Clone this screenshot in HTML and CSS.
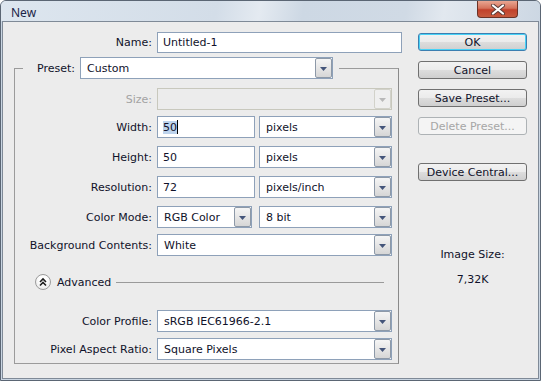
FILE: index.html
```html
<!DOCTYPE html>
<html>
<head>
    <title>New</title>
    <link rel="stylesheet" href="styles.css">
</head>
<body>
<div class="window">
    <div class="titlebar">
        <span class="title">New</span>
        <button class="close-btn">
            <svg width="16" height="11" viewBox="0 0 16 11">
                <path d="M3 1.5l10 8M13 1.5l-10 8" stroke="#5a3a36" stroke-width="4" stroke-linecap="round"/>
                <path d="M3 1.5l10 8M13 1.5l-10 8" stroke="#fff" stroke-width="2.2" stroke-linecap="round"/>
            </svg>
        </button>
    </div>
    <div class="client">
        <div class="main">
            <div class="row name-row">
                <span class="lbl name-lbl">Name:</span>
                <div class="field name-field">Untitled-1</div>
            </div>
            <fieldset class="group">
                <legend class="preset">
                    <span class="lbl preset-lbl">Preset:</span>
                    <div class="combo preset-combo"><span class="val">Custom</span><span class="drop"><svg width="7" height="4" viewBox="0 0 7 4"><path d="M0 0h7L3.5 4z"/></svg></span></div>
                </legend>

                <div class="row r-size">
                    <span class="lbl disabled">Size:</span>
                    <div class="combo wide disabled"><span class="val"></span><span class="drop"><svg width="7" height="4" viewBox="0 0 7 4"><path d="M0 0h7L3.5 4z"/></svg></span></div>
                </div>
                <div class="row r-width">
                    <span class="lbl">Width:</span>
                    <div class="field num"><span class="sel">50</span><span class="caret"></span></div>
                    <div class="combo unit"><span class="val">pixels</span><span class="drop"><svg width="7" height="4" viewBox="0 0 7 4"><path d="M0 0h7L3.5 4z"/></svg></span></div>
                </div>
                <div class="row r-height">
                    <span class="lbl">Height:</span>
                    <div class="field num">50</div>
                    <div class="combo unit"><span class="val">pixels</span><span class="drop"><svg width="7" height="4" viewBox="0 0 7 4"><path d="M0 0h7L3.5 4z"/></svg></span></div>
                </div>
                <div class="row r-res">
                    <span class="lbl">Resolution:</span>
                    <div class="field num">72</div>
                    <div class="combo unit"><span class="val">pixels/inch</span><span class="drop"><svg width="7" height="4" viewBox="0 0 7 4"><path d="M0 0h7L3.5 4z"/></svg></span></div>
                </div>
                <div class="row r-mode">
                    <span class="lbl">Color Mode:</span>
                    <div class="combo mode"><span class="val">RGB Color</span><span class="drop"><svg width="7" height="4" viewBox="0 0 7 4"><path d="M0 0h7L3.5 4z"/></svg></span></div>
                    <div class="combo unit"><span class="val">8 bit</span><span class="drop"><svg width="7" height="4" viewBox="0 0 7 4"><path d="M0 0h7L3.5 4z"/></svg></span></div>
                </div>
                <div class="row r-bg">
                    <span class="lbl">Background Contents:</span>
                    <div class="combo wide"><span class="val">White</span><span class="drop"><svg width="7" height="4" viewBox="0 0 7 4"><path d="M0 0h7L3.5 4z"/></svg></span></div>
                </div>

                <div class="advanced">
                    <span class="adv-btn">
                        <svg width="10" height="10" viewBox="0 0 10 10">
                            <path d="M2 5l3-3 3 3M2 8.5l3-3 3 3" fill="none" stroke="#1d1d1d" stroke-width="1.6"/>
                        </svg>
                    </span>
                    <span class="adv-text">Advanced</span>
                    <span class="adv-line"></span>
                </div>

                <div class="row r-profile">
                    <span class="lbl">Color Profile:</span>
                    <div class="combo wide"><span class="val">sRGB IEC61966-2.1</span><span class="drop"><svg width="7" height="4" viewBox="0 0 7 4"><path d="M0 0h7L3.5 4z"/></svg></span></div>
                </div>
                <div class="row r-aspect">
                    <span class="lbl">Pixel Aspect Ratio:</span>
                    <div class="combo wide"><span class="val">Square Pixels</span><span class="drop"><svg width="7" height="4" viewBox="0 0 7 4"><path d="M0 0h7L3.5 4z"/></svg></span></div>
                </div>
            </fieldset>
        </div>

        <div class="side">
            <button class="btn default">OK</button>
            <button class="btn">Cancel</button>
            <button class="btn">Save Preset...</button>
            <button class="btn" disabled>Delete Preset...</button>
            <button class="btn device">Device Central...</button>
            <div class="img-size">
                <p>Image Size:</p>
                <p>7,32K</p>
            </div>
        </div>
    </div>
</div>
</body>
</html>
```

FILE: styles.css
```css
* {
    box-sizing: border-box;
}

body {
    margin: 0;
    padding: 0;
    width: 541px;
    height: 381px;
    overflow: hidden;
    font-family: "DejaVu Sans", sans-serif;
    font-size: 11px;
    color: #10122a;
}

.window {
    width: 541px;
    height: 381px;
    border: 1px solid #5b6674;
    border-radius: 6px 6px 0 0;
    background: #c9d5e2;
    display: flex;
    flex-direction: column;
}

.titlebar {
    height: 20px;
    display: flex;
    align-items: flex-start;
    justify-content: space-between;
    background: linear-gradient(100deg, #dde6ef 0%, #d3dde8 40%, #e4eaf1 48%, #cdd8e4 56%, #d0dae5 75%, #e2e8ef 82%, #ccd7e3 100%);
    border-radius: 5px 5px 0 0;
}

.title {
    font-family: "Noto Sans", sans-serif;
    font-size: 12px;
    color: #1b2447;
    margin: 3px 0 0 10px;
}

.close-btn {
    width: 41px;
    height: 17px;
    margin: 0 22px 0 0;
    padding: 0;
    border: 1px solid #6b3226;
    border-top: none;
    border-radius: 0 0 4px 4px;
    background: linear-gradient(#e9a692 0%, #d5735c 45%, #c1412b 55%, #c65a3e 100%);
    display: flex;
    align-items: center;
    justify-content: center;
}

.client {
    flex: 1;
    margin: 0 1px 1px;
    border: 1px solid #7f8a97;
    background: #ececec;
    display: flex;
}

.main {
    width: 403px;
}

.row {
    display: flex;
    align-items: center;
}

.lbl {
    text-align: right;
    margin-right: 5px;
    white-space: nowrap;
}

.lbl.disabled {
    color: #a3a3a3;
}

.name-row {
    margin-top: 10px;
}

.name-lbl {
    width: 149px;
}

.field {
    height: 22px;
    border: 1px solid #8ea1b9;
    background: #fff;
    padding: 0 5px;
    display: flex;
    align-items: center;
    line-height: 13px;
}

.name-field {
    width: 245px;
    height: 21px;
}

.num {
    width: 98px;
    margin-right: 4px;
}

.sel {
    background: #bdd3ec;
}

.caret {
    width: 1px;
    height: 14px;
    background: #000;
}

.combo {
    height: 22px;
    border: 1px solid #8ea1b9;
    background: #fff;
    display: flex;
    align-items: stretch;
}

.combo .val {
    flex: 1;
    padding-left: 6px;
    display: flex;
    align-items: center;
}

.drop {
    width: 17px;
    border: 1px solid #8d99a8;
    border-radius: 2px;
    background: linear-gradient(#f5f5f5, #e6e6e6 50%, #d6d6d6);
    display: flex;
    align-items: center;
    justify-content: center;
    padding-top: 1px;
}

.drop svg {
    fill: #44557a;
}

.combo.disabled {
    background: #ececec;
    border-color: #c8c8bd;
}

.combo.disabled .drop {
    border-color: #d2d2ca;
    background: #efefef;
}

.combo.disabled .drop svg {
    fill: #b9b9b9;
}

.wide {
    width: 235px;
}

.unit {
    width: 133px;
}

.mode {
    width: 95px;
    margin-right: 7px;
}

.group {
    margin: 4px 0 0 11px;
    width: 385px;
    padding: 9px 0 3px 0;
    border: 1px solid #9b9b9b;
    border-right-color: #8a8a8a;
}

.preset {
    margin-left: 8px;
    padding: 0 6px 0 0;
    display: flex;
    align-items: center;
}

.preset-lbl {
    width: 52px;
}

.preset-combo {
    width: 253px;
    height: 22px;
}

.group .row .lbl {
    width: 137px;
}

.r-width {
    margin-top: 6px;
}

.r-height,
.r-res,
.r-mode {
    margin-top: 8px;
}

.r-bg {
    margin-top: 6px;
}

.advanced {
    display: flex;
    align-items: center;
    margin: 19px 14px 0 20px;
    height: 14px;
}

.adv-btn {
    width: 16px;
    height: 16px;
    border-radius: 50%;
    border: 1px solid #9c9c9c;
    background: radial-gradient(circle at 50% 35%, #ffffff 30%, #e2e2e2 100%);
    display: flex;
    align-items: center;
    justify-content: center;
}

.adv-text {
    margin-left: 6px;
}

.adv-line {
    flex: 1;
    height: 1px;
    background: #9a9a9a;
    margin-left: 5px;
}

.r-profile {
    margin-top: 21px;
}

.r-aspect {
    margin-top: 6px;
}

.side {
    width: 109px;
    margin-left: 12px;
    padding-top: 11px;
    display: flex;
    flex-direction: column;
}

.btn {
    height: 18px;
    margin-bottom: 10px;
    padding: 0;
    border: 1px solid #707070;
    border-radius: 3px;
    background: linear-gradient(#f2f2f2 0%, #ebebeb 50%, #dddddd 51%, #cfcfcf 100%);
    font: inherit;
    color: #10122a;
}

.btn.default {
    border-color: #3c7fb1;
    box-shadow: inset 0 0 0 1px #48d2f6;
}

.btn:disabled {
    border-color: #adb2b5;
    background: #f4f4f4;
    color: #a6a6a6;
}

.btn.device {
    margin-top: 18px;
}

.img-size {
    margin-top: 57px;
    text-align: center;
}

.img-size p {
    margin: 0 0 12px;
}
```
